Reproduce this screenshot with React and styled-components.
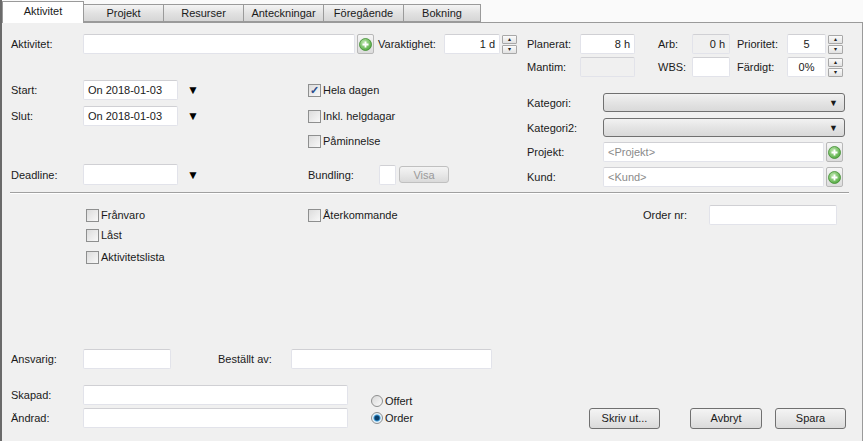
import React from "react";
import styled, { createGlobalStyle } from "styled-components";

const Global = createGlobalStyle`
  html, body { margin: 0; padding: 0; background: #fafafa; }
  body { font-family: "Liberation Sans", Tahoma, Arial, sans-serif; font-size: 11px; color: #1a1a1a; }
`;

const Win = styled.div`
  width: 863px; height: 441px; box-sizing: border-box;
  border-left: 2px solid #6a6a6a; background: #fafafa;
  display: flex; flex-direction: column; overflow: hidden;
`;
const TabBar = styled.div`
  height: 22px; display: flex; align-items: flex-end; padding-left: 0; position: relative; z-index: 1;
`;
const Tab = styled.div`
  box-sizing: border-box; width: ${p => p.$w}px; height: ${p => (p.$active ? 22 : 18)}px;
  margin-bottom: ${p => (p.$active ? -1 : 0)}px;
  display: flex; align-items: center; justify-content: center;
  border: 1px solid #9a9a9a; border-bottom: ${p => (p.$active ? "none" : "1px solid #9a9a9a")};
  margin-right: -1px;
  background: ${p => (p.$active ? "#ffffff" : "linear-gradient(#f4f4f4, #e2e2e2 50%, #d6d6d6)")};
  font-size: 11px; padding-bottom: ${p => (p.$active ? 3 : 0)}px;
`;
const Panel = styled.div`
  flex: 1; background: #f0f0f0; border-top: 1px solid #9a9a9a; border-right: 1px solid #9a9a9a;
  display: flex; flex-direction: column;
`;
const Top = styled.div` display: flex; `;
const Col = styled.div`
  display: flex; flex-direction: column; width: ${p => p.$w}px; padding-left: ${p => p.$pl}px; box-sizing: border-box;
`;
const Row = styled.div`
  display: flex; align-items: center; height: ${p => p.$h || 20}px; margin-top: ${p => p.$mt || 0}px;
  padding-left: ${p => p.$pl || 0}px;
`;
const Label = styled.div`
  width: ${p => p.$w}px; padding-left: ${p => p.$pl || 0}px; flex: none; box-sizing: border-box; white-space: nowrap;
`;
const Input = styled.div`
  box-sizing: border-box; width: ${p => p.$w}px; height: ${p => p.$h || 20}px; flex: none;
  background: ${p => (p.$disabled ? "#f0f0f0" : "#fff")};
  border: 1px solid #e2e3ea; border-top-color: #d0d0d4; border-radius: 2px;
  display: flex; align-items: center; padding: 0 4px;
  justify-content: ${p => (p.$right ? "flex-end" : p.$center ? "center" : "flex-start")};
  color: ${p => (p.$ph ? "#8a8a8a" : "#1a1a1a")}; font-size: 11px;
`;
const PlusBtn = styled.div`
  box-sizing: border-box; width: 17px; height: 20px; margin-left: 2px; flex: none;
  border: 1px solid #b8b8b8; border-radius: 2px; background: linear-gradient(#f6f6f6, #dcdcdc);
  display: flex; align-items: center; justify-content: center;
`;
const SpinWrap = styled.div`
  display: flex; flex-direction: column; gap: 1px; margin-left: 2px; flex: none;
`;
const SpinBtn = styled.div`
  width: 15px; height: 9px; box-sizing: border-box; border: 1px solid #a8a8a8; border-radius: 1px;
  background: linear-gradient(#fbfbfb, #e2e2e2); display: flex; align-items: center; justify-content: center;
  font-size: 6px; line-height: 1; color: #222;
`;
const ArrowCell = styled.div`
  width: ${p => p.$w}px; flex: none; padding-left: 9px; box-sizing: border-box; font-size: 12px; color: #000;
`;
const Check = styled.div`
  display: flex; align-items: center; gap: 2px; width: ${p => (p.$w ? p.$w + "px" : "auto")}; flex: none;
`;
const Box = styled.div`
  width: 13px; height: 13px; box-sizing: border-box; border: 1px solid #8e8f8f;
  background: linear-gradient(135deg, #dcdcdc, #f8f8f8); display: flex; align-items: center; justify-content: center;
  color: #2a4c8c; font-size: 11px; font-weight: bold; line-height: 1;
`;
const Radio = styled.div`
  width: 12px; height: 12px; border-radius: 50%; box-sizing: border-box; border: 1px solid #8e8f8f;
  background: ${p => (p.$on ? "radial-gradient(circle, #0a3f6b 0 2px, #3d9ad6 3px, #e6f2fa 4px)" : "linear-gradient(135deg, #d8d8d8, #fafafa)")};
`;
const Select = styled.div`
  box-sizing: border-box; width: 242px; height: 19px; border: 1px solid #707070; border-radius: 3px;
  background: linear-gradient(#f2f2f2, #e4e4e4 50%, #d9d9d9); display: flex; align-items: center; justify-content: flex-end;
  padding-right: 6px; font-size: 9px;
`;
const Button = styled.div`
  box-sizing: border-box; width: ${p => p.$w}px; height: ${p => p.$h || 21}px; margin-left: ${p => p.$ml || 0}px;
  border: 1px solid ${p => (p.$disabled ? "#c0c0c0" : "#707070")}; border-radius: 3px; flex: none;
  background: linear-gradient(#f4f4f4, #e8e8e8 50%, #dadada);
  color: ${p => (p.$disabled ? "#9a9a9a" : "#1a1a1a")};
  display: flex; align-items: center; justify-content: center;
`;
const Sep = styled.div`
  margin: 5px 13px 0 8px; height: 0; border-top: 1px solid #a0a0a0; border-bottom: 1px solid #fff;
`;
const Spacer = styled.div` width: ${p => p.$w}px; flex: none; `;

const Plus = () => (
  <PlusBtn>
    <svg width="13" height="13" viewBox="0 0 13 13">
      <defs>
        <radialGradient id="g" cx="40%" cy="35%" r="70%">
          <stop offset="0" stopColor="#bfe8b0" />
          <stop offset="1" stopColor="#4fa83c" />
        </radialGradient>
      </defs>
      <circle cx="6.5" cy="6.5" r="6" fill="url(#g)" stroke="#3f8c30" strokeWidth="0.8" />
      <path d="M6.5 3.5v6M3.5 6.5h6" stroke="#fff" strokeWidth="1.8" />
    </svg>
  </PlusBtn>
);
const Spin = () => (
  <SpinWrap>
    <SpinBtn>▴</SpinBtn>
    <SpinBtn>▾</SpinBtn>
  </SpinWrap>
);
const Cb = ({ label, on, w }) => (
  <Check $w={w}>
    <Box>{on ? "✓" : ""}</Box>
    <span>{label}</span>
  </Check>
);

export default function App() {
  return (
    <>
      <Global />
      <Win>
        <TabBar>
          <Tab $w={82} $active>Aktivitet</Tab>
          <Tab $w={81}>Projekt</Tab>
          <Tab $w={81}>Resurser</Tab>
          <Tab $w={81}>Anteckningar</Tab>
          <Tab $w={81}>Föregående</Tab>
          <Tab $w={78}>Bokning</Tab>
        </TabBar>
        <Panel>
          <Top>
            <Col $w={517} $pl={9}>
              <Row $mt={11}>
                <Label $w={72}>Aktivitet:</Label>
                <Input $w={272} />
                <Plus />
                <Label $w={70} $pl={4}>Varaktighet:</Label>
                <Input $w={56} $right>1 d</Input>
                <Spin />
              </Row>
              <Row $mt={26}>
                <Label $w={72}>Start:</Label>
                <Input $w={95}>On 2018-01-03</Input>
                <ArrowCell $w={130}>▼</ArrowCell>
                <Cb label="Hela dagen" on />
              </Row>
              <Row $mt={6}>
                <Label $w={72}>Slut:</Label>
                <Input $w={95}>On 2018-01-03</Input>
                <ArrowCell $w={130}>▼</ArrowCell>
                <Cb label="Inkl. helgdagar" />
              </Row>
              <Row $mt={5}>
                <Spacer $w={297} />
                <Cb label="Påminnelse" />
              </Row>
              <Row $mt={13} $h={21}>
                <Label $w={72}>Deadline:</Label>
                <Input $w={95} $h={21} />
                <ArrowCell $w={130}>▼</ArrowCell>
                <Label $w={71}>Bundling:</Label>
                <Input $w={17} $h={20} />
                <Button $w={50} $h={17} $ml={3} $disabled>Visa</Button>
              </Row>
            </Col>
            <Col $w={340} $pl={8}>
              <Row $mt={11}>
                <Label $w={53}>Planerat:</Label>
                <Input $w={55} $right>8 h</Input>
                <Label $w={57} $pl={23}>Arb:</Label>
                <Input $w={38} $right $disabled>0 h</Input>
                <Label $w={57} $pl={7}>Prioritet:</Label>
                <Input $w={39} $center>5</Input>
                <Spin />
              </Row>
              <Row $mt={3}>
                <Label $w={53}>Mantim:</Label>
                <Input $w={55} $disabled />
                <Label $w={57} $pl={23}>WBS:</Label>
                <Input $w={38} />
                <Label $w={57} $pl={7}>Färdigt:</Label>
                <Input $w={39} $center>0%</Input>
                <Spin />
              </Row>
              <Row $mt={16} $h={19}>
                <Label $w={76}>Kategori:</Label>
                <Select>▼</Select>
              </Row>
              <Row $mt={6} $h={19}>
                <Label $w={76}>Kategori2:</Label>
                <Select>▼</Select>
              </Row>
              <Row $mt={5}>
                <Label $w={76}>Projekt:</Label>
                <Input $w={221} $ph>&lt;Projekt&gt;</Input>
                <Plus />
              </Row>
              <Row $mt={5}>
                <Label $w={76}>Kund:</Label>
                <Input $w={221} $ph>&lt;Kund&gt;</Input>
                <Plus />
              </Row>
            </Col>
          </Top>
          <Sep />
          <Row $mt={11} $pl={84}>
            <Cb label="Frånvaro" w={222} />
            <Cb label="Återkommande" w={335} />
            <Label $w={66}>Order nr:</Label>
            <Input $w={128} />
          </Row>
          <Row $mt={1} $h={18} $pl={84}>
            <Cb label="Låst" />
          </Row>
          <Row $mt={3} $h={20} $pl={84}>
            <Cb label="Aktivitetslista" />
          </Row>
          <Row $mt={82} $pl={9}>
            <Label $w={72}>Ansvarig:</Label>
            <Input $w={88} />
            <Label $w={120} $pl={47}>Beställt av:</Label>
            <Input $w={201} />
          </Row>
          <Row $mt={16} $pl={9}>
            <Label $w={72}>Skapad:</Label>
            <Input $w={265} />
            <Spacer $w={23} />
            <Check style={{ marginTop: 12 }}><Radio /><span>Offert</span></Check>
          </Row>
          <Row $mt={3} $pl={9}>
            <Label $w={72}>Ändrad:</Label>
            <Input $w={265} />
            <Spacer $w={23} />
            <Check $w={218}><Radio $on /><span>Order</span></Check>
            <Button $w={71}>Skriv ut...</Button>
            <Button $w={72} $ml={30}>Avbryt</Button>
            <Button $w={71} $ml={13}>Spara</Button>
          </Row>
        </Panel>
      </Win>
    </>
  );
}
